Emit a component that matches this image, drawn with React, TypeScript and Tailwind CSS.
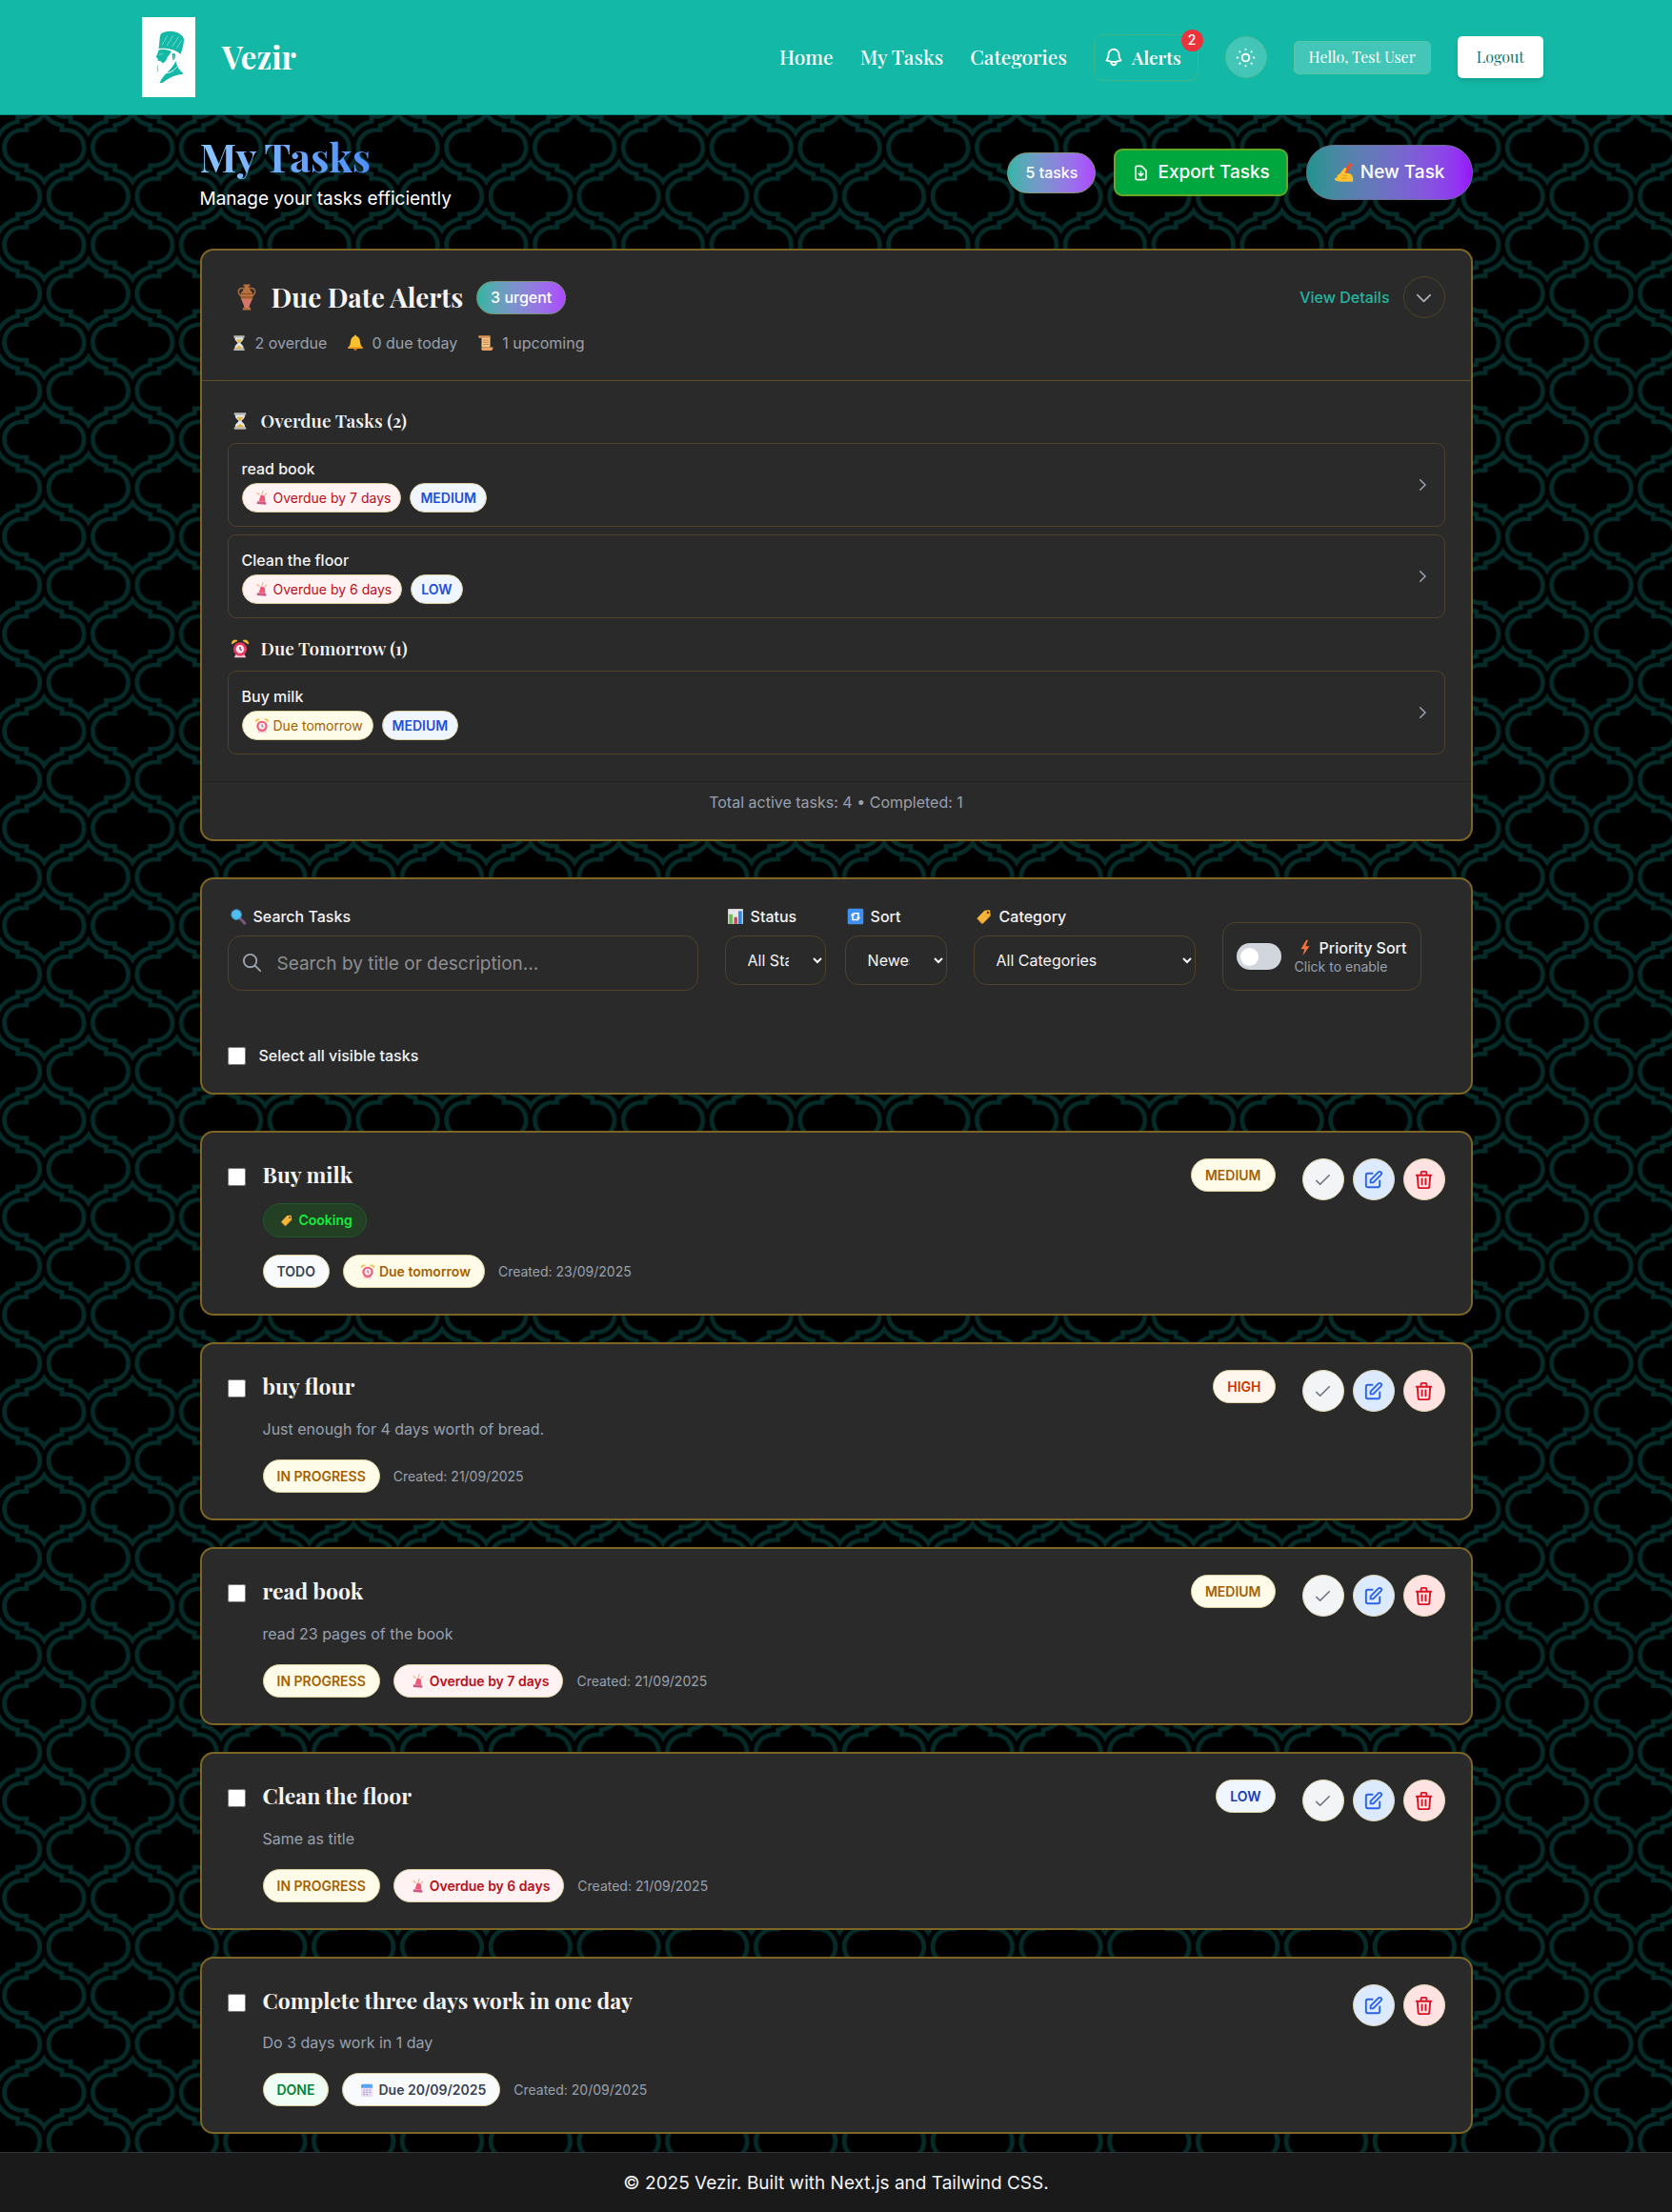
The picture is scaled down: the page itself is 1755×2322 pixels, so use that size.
import { useState, type ReactNode } from "react";
import clsx from "clsx";

/* ---------- Pictograms ---------- */

const glyphs = {
  hourglass: (
    <>
      <path d="M6 3h12v3c0 3-4 4.500-4 6s4 3 4 6v3H6v-3c0-3 4-4.500 4-6S6 9 6 6z" fill="#dfe9ee" />
      <path d="M8 7h8c-.7 2.500-3 3.300-3.300 5h-1.400C11 10.300 8.700 9.500 8 7zM7.500 20c0-3 3.500-2.500 4.500-5 1 2.500 4.500 2 4.500 5z" fill="#e8b341" />
      <path d="M4.500 1.500h15v3h-15zM4.500 19.500h15v3h-15z" fill="#b9b7ae" />
    </>
  ),
  bell: (
    <>
      <path d="M12 1c1 0 1.600.8 1.600 1.700 3.400.9 4.900 4.300 5.100 7.800.2 3.500 1.300 5.300 3.300 7.500v1.500H2V18c2-2.200 3.100-4 3.300-7.500.2-3.500 1.700-6.900 5.100-7.800C10.400 1.800 11 1 12 1z" fill="#fcbf2d" />
      <path d="M2 17.500h20V20H2z" fill="#f09a1c" />
      <path d="M9.500 20h5a2.500 2.500 0 0 1-5 0z" fill="#b8742b" />
    </>
  ),
  scroll: (
    <>
      <path d="M6 3h12v15H6z" fill="#f7c68a" />
      <path d="M2.500 1.500H18v3.500H4.500a2 2 0 0 1-2-3.500z" fill="#d99354" />
      <path d="M8 8h8M8 11h8M8 14h8" stroke="#c98549" strokeWidth="1.300" />
      <path d="M6 18h16c0 2.500-1 4.500-2.500 4.500H7.500C6 22.500 5 20 6 18z" fill="#e9a566" />
    </>
  ),
  amphora: (
    <>
      <path d="M9.500 4C4 3 3 8 7 11M14.500 4C20 3 21 8 17 11" fill="none" stroke="#a5673f" strokeWidth="1.400" />
      <path d="M9 .5h6v1.500h-1c0 4 4 5 3.600 9-.4 4.500-3.200 6.500-3.600 10.500h1.500v2h-7v-2H10c-.4-4-3.200-6-3.600-10.500C6 7 10 6 10 2H9z" fill="#b8703f" />
      <path d="M7.300 14h9.400c-.9 2.800-2.400 4.600-2.700 7.500h-4c-.3-2.900-1.800-4.700-2.700-7.500z" fill="#d9756c" />
      <path d="M7.200 9h9.600M6.600 12h10.800" stroke="#7e4726" strokeWidth=".8" />
    </>
  ),
  siren: (
    <>
      <path d="M7 17l2.500-8.500c.4-1.200 1.500-1.900 2.700-1.500l2.500.7c1.300.4 2 1.500 1.900 2.700L17 18z" fill="#f0325a" />
      <path d="M4.500 17l14 1.500V22l-14.500-1z" fill="#b9356d" />
      <path d="M12.500 5l1-4M7.500 6.500L4.500 3.500M17 7l2-2.500" stroke="#f2a04a" strokeWidth="1.700" strokeLinecap="round" />
    </>
  ),
  alarm: (
    <>
      <path d="M1.500 6.500a4.500 4.500 0 0 1 7.500-4.500zM22.500 6.500A4.500 4.500 0 0 0 15 2z" fill="#f6b333" />
      <path d="M4.500 23h15L17 18.500H7z" fill="#f1c2d2" />
      <circle cx="12" cy="12.500" r="8.500" fill="#e8365f" />
      <circle cx="12" cy="12.500" r="5.200" fill="#fbe4ee" />
      <path d="M12 9.500v3.300l2.300 1" fill="none" stroke="#6a2b6d" strokeWidth="1.400" />
    </>
  ),
  magnifier: (
    <>
      <path d="M14 14l7 7.500" stroke="#80507f" strokeWidth="4" strokeLinecap="round" />
      <circle cx="9.500" cy="9.500" r="7.500" fill="#4fc0ee" />
      <circle cx="9.500" cy="9.500" r="7" fill="none" stroke="#3a7fae" strokeWidth="1.200" />
    </>
  ),
  chart: (
    <>
      <path d="M1.500 1.500h21v21h-21z" fill="#e6e6ea" />
      <path d="M3 9h5v13.500H3z" fill="#69bd55" />
      <path d="M10 13h4.500v9.500H10z" fill="#d23c6d" />
      <path d="M16 4.500h5v18h-5z" fill="#2f8be0" />
    </>
  ),
  cycle: (
    <>
      <rect x="1" y="1" width="22" height="22" rx="2" fill="#3f8ff0" />
      <path d="M8 9.500v7h8M16 14.500v-7H9" fill="none" stroke="#fff" strokeWidth="2" />
      <path d="M5 11l3-4 3 4zM13 13l3 4 3-4z" fill="#fff" />
    </>
  ),
  tag: (
    <>
      <path d="M12.500 3.500L20 3l1 7.500L10.500 21.500a1.500 1.500 0 0 1-2.200 0l-5.500-5.800a1.500 1.500 0 0 1 0-2.200z" fill="#f6b43a" />
      <path d="M2.600 15l6 6.400a1.500 1.500 0 0 0 2 0L21 10.500" fill="none" stroke="#d98a22" strokeWidth="1.200" />
      <circle cx="17.300" cy="6.700" r="1.700" fill="#6b3f2a" />
    </>
  ),
  bolt: <path d="M13.500 1L6 13.500h5L8.500 23 18 9.500h-5.500L16 1z" fill="#f5743a" />,
  calendar: (
    <>
      <rect x="3" y="3" width="18" height="19.500" rx="2" fill="#e3d7f1" />
      <path d="M3 8.500V5a2.500 2.500 0 0 1 2.500-2.500h13A2.500 2.500 0 0 1 21 5v3.500z" fill="#2f8ff0" />
      <path d="M6.500 12h2.500M11 12h2.500M15.500 12H18M6.500 15.500h2.500M11 15.500h2.500M15.500 15.500H18M6.500 19h2.500M11 19h2.500" stroke="#9a86bd" strokeWidth="1.800" />
    </>
  ),
  writing: (
    <>
      <path d="M10 13L18 1l3.500 2L13.500 15z" fill="#e8502f" />
      <path d="M10 13l-2.500 5.500L13.500 15z" fill="#5c3a2a" />
      <path d="M6 14.500L12 7c1-1 3.300.3 2.200 2L12.500 12.500l5 .5c3 .6 4.500 3 4.500 6v3.500H9c-3 0-8-1-8-3 0-1.500 2-1.500 3-1.500-.5-1.500 0-3.500 2-3.500z" fill="#fcc22f" />
      <path d="M9 18.500h6M10 15.500h5" stroke="#e39a20" strokeWidth="1.200" />
    </>
  ),
};
type GlyphName = keyof typeof glyphs;

function Glyph({ name, className = "size-4" }: { name: GlyphName; className?: string }) {
  return (
    <svg viewBox="0 0 24 24" aria-hidden="true" className={clsx("shrink-0", className)}>
      {glyphs[name]}
    </svg>
  );
}

function Stroke({ d, width = 2, className = "size-[23px]" }: { d: string; width?: number; className?: string }) {
  return (
    <svg viewBox="0 0 24 24" fill="none" stroke="currentColor" strokeWidth={width} strokeLinecap="round" strokeLinejoin="round" aria-hidden="true" className={clsx("shrink-0", className)}>
      <path d={d} />
    </svg>
  );
}

const paths = {
  bell: "M14.857 17.082a23.848 23.848 0 005.454-1.310A8.967 8.967 0 0118 9.750V9A6 6 0 006 9v.750a8.967 8.967 0 01-2.312 6.022c1.733.640 3.560 1.085 5.455 1.310m5.714 0a24.255 24.255 0 01-5.714 0m5.714 0a3 3 0 11-5.714 0",
  download: "M12 10v6m0 0l-3-3m3 3l3-3m2 8H7a2 2 0 01-2-2V5a2 2 0 012-2h5.586a1 1 0 01.707.293l5.414 5.414a1 1 0 01.293.707V19a2 2 0 01-2 2z",
  check: "M5 13l4 4L19 7",
  edit: "M11 5H6a2 2 0 00-2 2v11a2 2 0 002 2h11a2 2 0 002-2v-5m-1.414-9.414a2 2 0 112.828 2.828L11.828 15H9v-2.828l8.586-8.586z",
  trash: "M19 7l-.867 12.142A2 2 0 0116.138 21H7.862a2 2 0 01-1.995-1.858L5 7m5 4v6m4-6v6m1-10V4a1 1 0 00-1-1h-4a1 1 0 00-1 1v3M4 7h16",
  down: "M19 9l-7 7-7-7",
  right: "M9 5l7 7-7 7",
  search: "M21 21l-6-6m2-5a7 7 0 11-14 0 7 7 0 0114 0z",
};

function MoroccanBackdrop() {
  return (
    <svg aria-hidden="true" className="absolute inset-0 h-full w-full">
      <defs>
        <pattern id="moroccan" width="80" height="88" patternUnits="userSpaceOnUse" patternTransform="translate(0 2) scale(1.16)">
          <path
            fill="#062c29"
            d="M22 21.910V26h-2c-9.940 0-18 8.060-18 18 0 9.943 8.058 18 18 18h2v4.090c8.012.722 14.785 5.738 18 12.730 3.212-6.990 9.983-12.008 18-12.730V62h2c9.940 0 18-8.060 18-18 0-9.943-8.058-18-18-18h-2v-4.090c-8.012-.722-14.785-5.738-18-12.730-3.212 6.990-9.983 12.008-18 12.730zM54 58v4.696c-5.574 1.316-10.455 4.428-14 8.690-3.545-4.262-8.426-7.374-14-8.690V58h-5.993C12.271 58 6 51.734 6 44c0-7.732 6.275-14 14.007-14H26v-4.696c5.574-1.316 10.455-4.428 14-8.690 3.545 4.262 8.426 7.374 14 8.690V30h5.993C67.729 30 74 36.266 74 44c0 7.732-6.275 14-14.007 14H54zM42 88c0-9.940 8.060-18 18-18h2v-4.090c8.016-.722 14.787-5.738 18-12.730v7.434c-3.545 4.262-8.426 7.374-14 8.690V74h-5.993C52.275 74 46 80.268 46 88h-4zm-4 0c0-9.943-8.058-18-18-18h-2v-4.090c-8.012-.722-14.785-5.738-18-12.730v7.434c3.545 4.262 8.426 7.374 14 8.690V74h5.993C27.729 74 34 80.266 34 88h4zm4-88c0 9.943 8.058 18 18 18h2v4.090c8.012.722 14.785 5.738 18 12.730v-7.434c-3.545-4.262-8.426-7.374-14-8.690V14h-5.993C52.271 14 46 7.734 46 0h-4zM0 34.820c3.213-6.992 9.984-12.008 18-12.730V18h2c9.940 0 18-8.060 18-18h-4c0 7.732-6.275 14-14.007 14H14v4.696c-5.574 1.316-10.455 4.428-14 8.690v7.433z"
          />
        </pattern>
      </defs>
      <rect width="100%" height="100%" fill="url(#moroccan)" />
    </svg>
  );
}

function Logo() {
  return (
    <svg viewBox="0 0 56 84" role="img" aria-label="Vezir logo" className="h-[84px] w-14 bg-white">
      <g fill="#14b8a6">
        <path d="M20 17.500c3.500-2.500 10-3.500 15.500-1.800 4.500 1.400 8.500 4.300 8.500 8.300 0 4.500-2 10.500-3.500 15-5-5-13.500-7-23-6 1.200-5 .8-13 2.500-15.500z" />
        <path d="M17.500 34.500c5.500-.8 9.500-.3 13 1.200-.4 3.800-3.300 4.300-4.200 7.300-.6 2.600-2.300 4.500-4.800 5.500-.5-2-3-3-4.700-2.800-.7-.7.200-1.600-.3-2.700-1.600-.3-1.900-1-1-2.800.8-1.600 1.600-3.400 2-5.700z" />
        <path d="M31.500 38.500c2.500-1.500 4.200.2 3.700 2.800-.4 2-1.200 3.700-2.700 4z" />
        <path d="M35.500 46c.5 4.500 3.500 10 8.500 13.500-7.500 1-15.500 3.500-21.500 9l-4 .8c2-5.300 5-8.300 8.300-11.600C30.500 54 33.500 50.500 35.500 46z" />
      </g>
      <path d="M17 50.500l-1 2.500 1 2-1 2.500" fill="none" stroke="#14b8a6" strokeWidth=".7" />
      <g fill="none" stroke="#fff" strokeWidth=".55" strokeOpacity=".75">
        <path d="M21 29.500c2.300-4 4-7 5.500-10M26 30c3-4.500 5-7.500 6.500-10.500M31.500 31c3-4 5-7 7-10.500M36.500 32.500c2-2.500 3.500-5 5-8" />
        <path d="M18 39.500l4-1.200M33 40c1.400 0 1.200 2 .4 3.500" />
      </g>
      <path d="M24.500 58.500c4 .7 8-1.500 12.500-6.500" fill="none" stroke="#fff" strokeWidth="1" />
    </svg>
  );
}

function Sun() {
  return (
    <svg viewBox="0 0 24 24" fill="none" stroke="currentColor" strokeLinecap="round" aria-hidden="true" className="size-[23px]">
      <circle cx="12" cy="12" r="4" strokeWidth="2" />
      <path strokeWidth="2" d="M12 2.700v.6M12 20.700v.6M2.700 12h.6M20.700 12h.6M5.500 5.500l.3.300M18.200 18.200l.3.300M18.500 5.500l-.3.300M5.800 18.200l-.3.300" />
    </svg>
  );
}

/* ---------- Pieces ---------- */

type Tone = "red" | "yellow" | "blue" | "indigo" | "green" | "slate" | "orange";
const tones: Record<Tone, string> = {
  red: "bg-[#fef2f2] text-[#b80f1a]",
  yellow: "bg-[#fefce8] text-[#a65f00]",
  blue: "bg-[#eff6ff] text-[#1d4fd7]",
  indigo: "bg-[#eff6ff] text-[#193cb8]",
  green: "bg-[#f0fdf4] text-[#008236]",
  slate: "bg-[#f9fafb] text-[#364153]",
  orange: "bg-[#fff7ed] text-[#ca3500]",
};

function Pill({ tone, glyph, small, bold, children }: { tone: Tone; glyph?: GlyphName; small?: boolean; bold?: boolean; children: ReactNode }) {
  return (
    <span
      className={clsx(
        "inline-flex shrink-0 items-center gap-1 whitespace-nowrap rounded-full border border-[#d9cf9f] text-sm",
        small ? "h-[31px] px-2.5" : "h-[35px] px-3.5",
        bold ? "font-semibold" : "font-normal",
        tones[tone],
      )}
    >
      {glyph && <Glyph name={glyph} className={small ? "ml-0.5 size-4 opacity-80" : "ml-[3px] size-4 opacity-80"} />}
      {children}
    </span>
  );
}

const card = "rounded-[14px] border-2 border-[#7d6525] bg-[#2a2a2a]";
const serif = "font-['Playfair_Display','Liberation_Serif',serif]";

function AlertItem({ title, children }: { title: string; children: ReactNode }) {
  return (
    <a href="#task" className="flex items-center justify-between rounded-[9px] border border-[#4e4328] p-3.5">
      <div>
        <p className="text-base leading-6 font-medium text-[#f3f4f6]">{title}</p>
        <div className="mt-[3px] flex gap-[9px]">{children}</div>
      </div>
      <Stroke d={paths.right} className="size-[18px] text-[#9ca3af]" />
    </a>
  );
}

function AlertHeading({ glyph, children }: { glyph: GlyphName; children: ReactNode }) {
  return (
    <h3 className={clsx("mb-[9px] flex items-center gap-2.5 pl-[3px] text-[19px] leading-[29px] font-semibold text-[#f3f4f6]", serif)}>
      <Glyph name={glyph} className="mr-0.5 size-5" />
      {children}
    </h3>
  );
}

function FieldLabel({ htmlFor, glyph, children }: { htmlFor: string; glyph: GlyphName; children: ReactNode }) {
  return (
    <label htmlFor={htmlFor} className="mb-[9px] flex h-[23px] items-center gap-[7px] pl-0.5 text-base font-medium text-[#f3f4f6]">
      <Glyph name={glyph} className="size-[18px]" />
      {children}
    </label>
  );
}

const selectStyle = "block h-[52px] w-full rounded-[14px] border border-[#4e4328] bg-[#2a2a2a] pr-[22px] pl-[19px] text-base text-[#f3f4f6]";

function RoundButton({ label, d, className, width }: { label: string; d: string; className: string; width?: number }) {
  return (
    <button type="button" aria-label={label} className={clsx("flex size-11 items-center justify-center rounded-full border border-[#e0d6b0]", className)}>
      <Stroke d={d} width={width} />
    </button>
  );
}

interface Task {
  title: string;
  description?: string;
  category?: string;
  status: [string, Tone];
  due?: [string, Tone, GlyphName];
  created: string;
  priority?: [string, Tone];
}

const tasks: Task[] = [
  { title: "Buy milk", category: "Cooking", status: ["TODO", "slate"], due: ["Due tomorrow", "yellow", "alarm"], created: "23/09/2025", priority: ["MEDIUM", "yellow"] },
  { title: "buy flour", description: "Just enough for 4 days worth of bread.", status: ["IN PROGRESS", "yellow"], created: "21/09/2025", priority: ["HIGH", "orange"] },
  { title: "read book", description: "read 23 pages of the book", status: ["IN PROGRESS", "yellow"], due: ["Overdue by 7 days", "red", "siren"], created: "21/09/2025", priority: ["MEDIUM", "yellow"] },
  { title: "Clean the floor", description: "Same as title", status: ["IN PROGRESS", "yellow"], due: ["Overdue by 6 days", "red", "siren"], created: "21/09/2025", priority: ["LOW", "indigo"] },
  { title: "Complete three days work in one day", description: "Do 3 days work in 1 day", status: ["DONE", "green"], due: ["Due 20/09/2025", "slate", "calendar"], created: "20/09/2025" },
];

function TaskCard({ task }: { task: Task }) {
  return (
    <article className={clsx(card, "flex items-start p-[27px]")}>
      <input type="checkbox" aria-label={`Select ${task.title}`} className="mt-2.5 size-[19px] shrink-0" />
      <div className="ml-[18px] flex-1">
        <div className="flex items-start justify-between">
          <h2 className={clsx("text-[23px] leading-[34px] font-bold text-[#f3f4f6]", serif)}>{task.title}</h2>
          {task.priority && (
            <Pill tone={task.priority[1]} bold>
              {task.priority[0]}
            </Pill>
          )}
        </div>
        {task.category && (
          <span className="mt-3 inline-flex h-9 items-center gap-1.5 rounded-full border border-[#20582b] bg-[#234024] px-3.5 text-sm font-semibold text-[#14ee3c]">
            <Glyph name="tag" className="ml-[3px] size-3.5" />
            {task.category}
          </span>
        )}
        {task.description && <p className="mt-3.5 text-base leading-[26px] text-[#99a1af]">{task.description}</p>}
        <div className={clsx("flex items-center gap-3.5", task.category ? "mt-[18px]" : "mt-[19px]")}>
          <Pill tone={task.status[1]} bold>
            {task.status[0]}
          </Pill>
          {task.due && (
            <Pill tone={task.due[1]} glyph={task.due[2]} bold>
              {task.due[0]}
            </Pill>
          )}
          <span className="text-sm text-[#99a1af]">Created: {task.created}</span>
        </div>
      </div>
      <div className="ml-7 flex gap-[9px]">
        {task.priority && <RoundButton label="Mark as done" d={paths.check} width={1.7} className="bg-[#f3f4f6] text-[#6a7282]" />}
        <RoundButton label="Edit task" d={paths.edit} className="bg-[#dbeafe] text-[#2b62ea]" />
        <RoundButton label="Delete task" d={paths.trash} className="bg-[#ffe2e2] text-[#dc1426]" />
      </div>
    </article>
  );
}

export default function App() {
  const [prioritySort, setPrioritySort] = useState(false);

  return (
    <div className="relative flex min-h-screen flex-col bg-black font-['Inter',sans-serif]">
      <MoroccanBackdrop />

      <header className="relative border-b border-[#0e8177] bg-[#14b8a6]">
        <div className={clsx("mx-auto flex h-[120px] max-w-[1485px] items-center justify-between pl-3.5 text-white", serif)}>
          <a href="#home" className="flex items-center gap-7 text-[33px] font-bold">
            <Logo />
            Vezir
          </a>
          <nav className="flex items-center gap-7 text-[21px] font-medium">
            <a href="#home">Home</a>
            <a href="#tasks">My Tasks</a>
            <a href="#categories">Categories</a>
            <button type="button" className="relative flex h-[49px] items-center gap-2 rounded-[9px] border border-[#3bb687] pr-[17px] pl-[9px] text-[19px] font-semibold">
              <Stroke d={paths.bell} className="size-[22px]" />
              Alerts
              <span className="absolute -top-1.5 -right-1.5 flex size-[23px] items-center justify-center rounded-full bg-[#ea333c] font-['Inter',sans-serif] text-sm font-medium">2</span>
            </button>
            <button type="button" aria-label="Toggle theme" className="flex size-11 items-center justify-center rounded-full border border-[#49bd97] bg-[#43c6b7]">
              <Sun />
            </button>
            <span className="flex h-[35px] items-center rounded-[5px] border border-[#5cc3a4] bg-[#43c6b7] px-[15px] text-base font-normal">Hello, Test User</span>
            <button type="button" className="h-11 rounded-[5px] bg-white px-5 text-base font-normal text-[#0f766e] shadow-md">
              Logout
            </button>
          </nav>
        </div>
      </header>

      <main className="relative mx-auto w-full max-w-[1336px] flex-1 pt-[18px] pb-[19px]">
        <div className="flex items-center justify-between">
          <div>
            <h1 className={clsx("w-fit bg-gradient-to-r from-[#8ec5ff] to-[#4d8ef8] bg-clip-text text-[42px] leading-[50px] font-bold text-transparent", serif)}>My Tasks</h1>
            <p className="mt-1.5 text-[19px] leading-7 text-white">Manage your tasks efficiently</p>
          </div>
          <div className="flex items-center gap-[19px] text-white">
            <span className="flex h-[43px] items-center rounded-full border border-[#8d9273] bg-gradient-to-r from-[#2db5a8] to-[#ad46ff] px-[18px] text-base font-medium">5 tasks</span>
            <button type="button" className="flex h-[50px] items-center gap-2 rounded-[9px] border-2 border-[#65a824] bg-[#00a63e] px-[17px] text-[19px] font-medium">
              <Stroke d={paths.download} className="size-[19px]" />
              Export Tasks
            </button>
            <button type="button" className="flex h-[58px] items-center gap-1.5 rounded-full border border-[#6c6f8f] bg-gradient-to-r from-[#1c948e] to-[#9810fa] px-7 text-[19px] font-medium">
              <Glyph name="writing" className="size-[22px]" />
              New Task
            </button>
          </div>
        </div>

        <section className={clsx(card, "mt-[38px]")}>
          <div className="border-b border-[#5f4f2b] p-[27px]">
            <div className="flex h-11 items-center justify-between">
              <div className="flex items-center">
                <Glyph name="amphora" className="ml-1.5 size-7" />
                <h2 className={clsx("ml-3 text-[28px] leading-9 font-bold text-[#f3f4f6]", serif)}>Due Date Alerts</h2>
                <span className="ml-3.5 flex h-[35px] items-center rounded-full border border-[#7a9273] bg-gradient-to-r from-[#2db5a0] to-[#ad46ff] px-3.5 text-base font-medium text-white">3 urgent</span>
              </div>
              <div className="flex items-center gap-3.5">
                <a href="#details" className="text-base font-medium text-[#25b5a0]">
                  View Details
                </a>
                <button type="button" aria-label="Collapse alerts" className="flex size-11 items-center justify-center rounded-full border border-[#4e4328] text-[#b0b4bb]">
                  <Stroke d={paths.down} width={1.7} className="size-[23px]" />
                </button>
              </div>
            </div>
            <div className="mt-3.5 flex h-6 gap-[21px] pl-[3px] text-base leading-6 text-[#99a1af]">
              <span className="flex items-center gap-2">
                <Glyph name="hourglass" className="size-[18px]" />2 overdue
              </span>
              <span className="flex items-center gap-2">
                <Glyph name="bell" className="size-[18px]" />0 due today
              </span>
              <span className="flex items-center gap-2">
                <Glyph name="scroll" className="size-[18px]" />1 upcoming
              </span>
            </div>
          </div>

          <div className="p-[27px] pb-7">
            <AlertHeading glyph="hourglass">Overdue Tasks (2)</AlertHeading>
            <div className="flex flex-col gap-2">
              <AlertItem title="read book">
                <Pill small tone="red" glyph="siren">Overdue by 7 days</Pill>
                <Pill small tone="blue" bold>MEDIUM</Pill>
              </AlertItem>
              <AlertItem title="Clean the floor">
                <Pill small tone="red" glyph="siren">Overdue by 6 days</Pill>
                <Pill small tone="blue" bold>LOW</Pill>
              </AlertItem>
            </div>
            <div className="mt-[17px]">
              <AlertHeading glyph="alarm">Due Tomorrow (1)</AlertHeading>
              <AlertItem title="Buy milk">
                <Pill small tone="yellow" glyph="alarm">Due tomorrow</Pill>
                <Pill small tone="blue" bold>MEDIUM</Pill>
              </AlertItem>
            </div>
          </div>

          <p className="border-t border-[#202021] pt-[9px] pb-[27px] text-center text-base leading-6 text-[#99a1af]">Total active tasks: 4 • Completed: 1</p>
        </section>

        <section className={clsx(card, "mt-[38px] p-[27px]")}>
          <div className="flex items-start gap-7">
            <div className="flex-1">
              <FieldLabel htmlFor="search" glyph="magnifier">Search Tasks</FieldLabel>
              <div className="relative">
                <Stroke d={paths.search} className="absolute top-[17px] left-3.5 size-[23px] text-[#9ca3af]" />
                <input id="search" type="search" placeholder="Search by title or description..." className="block h-[58px] w-full rounded-[14px] border border-[#4e4328] bg-[#2a2a2a] pr-4 pl-[51px] text-[19px] text-[#f3f4f6] placeholder:text-[#8d8f93]" />
              </div>
            </div>
            <div className="flex gap-5">
              <div className="w-[106px]">
                <FieldLabel htmlFor="status" glyph="chart">Status</FieldLabel>
                <select id="status" className={selectStyle}>
                  <option>All Status</option>
                  <option>Todo</option>
                  <option>In Progress</option>
                  <option>Done</option>
                </select>
              </div>
              <div className="w-[107px]">
                <FieldLabel htmlFor="sort" glyph="cycle">Sort</FieldLabel>
                <select id="sort" className={selectStyle}>
                  <option>Newest First</option>
                  <option>Oldest First</option>
                </select>
              </div>
            </div>
            <div className="w-[233px]">
              <FieldLabel htmlFor="category" glyph="tag">Category</FieldLabel>
              <select id="category" className={selectStyle}>
                <option>All Categories</option>
                <option>Cooking</option>
              </select>
            </div>
            <div className="mr-[25px] flex h-[72px] items-center gap-3.5 self-end rounded-[14px] border border-[#4e4328] px-3.5">
              <button
                type="button"
                role="switch"
                aria-checked={prioritySort}
                aria-labelledby="priority-label"
                onClick={() => setPrioritySort(!prioritySort)}
                className={clsx("flex h-7 w-[47px] items-center rounded-full px-1", prioritySort ? "justify-end bg-[#14b8a6]" : "justify-start bg-[#d1d5dc]")}
              >
                <span className="size-[19px] rounded-full bg-white" />
              </button>
              <div>
                <p id="priority-label" className="flex items-center gap-1.5 pl-0.5 text-base leading-[22px] font-medium text-[#f3f4f6]">
                  <Glyph name="bolt" className="size-[18px]" />
                  Priority Sort
                </p>
                <p className="text-sm leading-[18px] text-[#99a1af]">Click to enable</p>
              </div>
            </div>
          </div>
          <label className="mt-14 flex h-6 w-fit items-center gap-3.5 text-base font-medium text-[#f3f4f6]">
            <input type="checkbox" className="size-[19px]" />
            Select all visible tasks
          </label>
        </section>

        <div className="mt-[38px] flex flex-col gap-7">
          {tasks.map((task) => (
            <TaskCard key={task.title} task={task} />
          ))}
        </div>
      </main>

      <footer className="relative flex h-16 items-center justify-center border-t border-[#33363b] bg-[#1a1a1a] pt-0.5 text-[19px] text-[#f3f4f6]">
        © 2025 Vezir. Built with Next.js and Tailwind CSS.
      </footer>
    </div>
  );
}
